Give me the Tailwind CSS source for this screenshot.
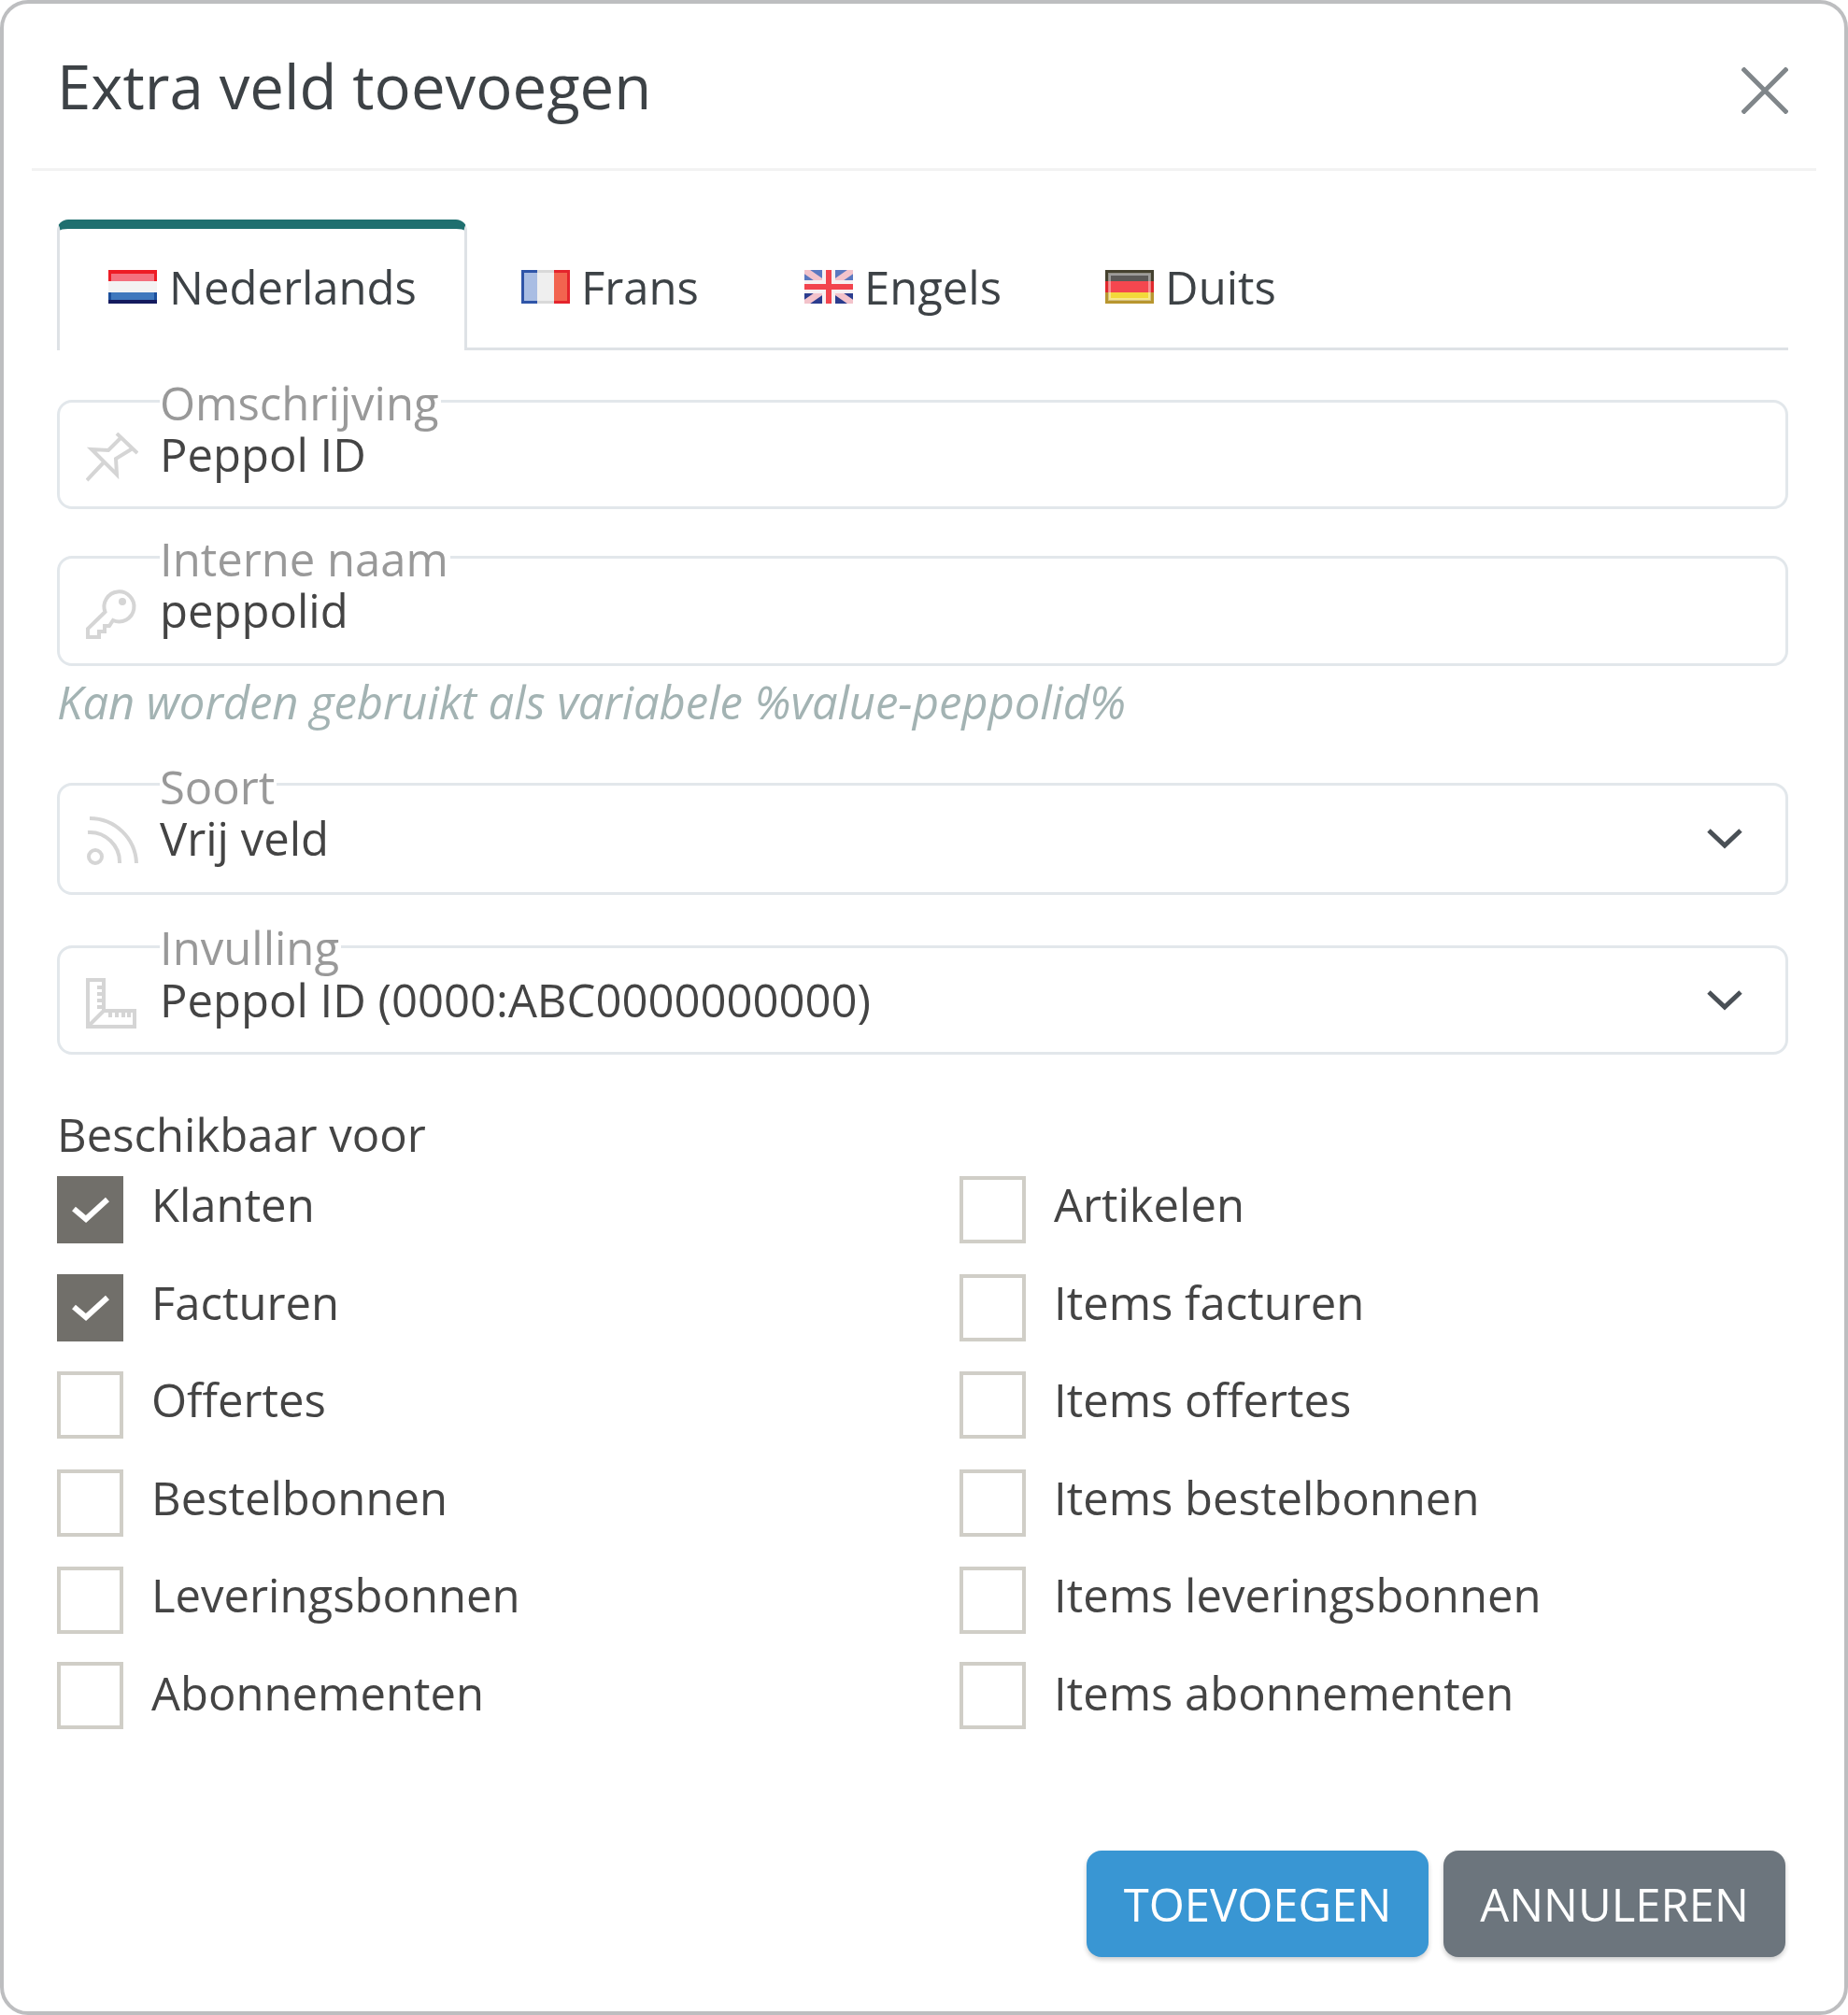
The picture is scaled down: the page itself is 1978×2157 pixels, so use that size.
<!DOCTYPE html>
<html>
  <head>
    <meta charset="utf-8">
    <title>Extra veld toevoegen</title>
    <script src="https://cdn.jsdelivr.net/npm/@tailwindcss/browser@4"></script>
  </head>
  <body class="bg-white">
    <div class="w-[1978px] h-[2157px] flex flex-col border-4 border-[#bdbec0] rounded-[30px] bg-white text-[#444444] font-['Open_Sans',sans-serif] text-[49px] leading-[60px]">
      <!-- header -->
      <div class="mx-[30px] h-[179px] shrink-0 flex items-start justify-between border-b-[3px] border-[#f2f2f2] pl-[27px] pr-[30px]">
        <h1 class="mt-[50px] text-[65.3px] leading-[76px] text-[#3d4246]">Extra veld toevoegen</h1>
        <svg class="mt-[68px]" width="50" height="50" viewBox="0 0 50 50" fill="none" stroke="#80868a" stroke-width="5"><path d="M1 1 49 49M49 1 1 49"/></svg>
      </div>

      <div class="flex flex-col pl-[57px] pr-[60px] pt-[52px]">
        <!-- tabs -->
        <div class="flex h-[140px] border-b-[3px] border-[#dee2e6] text-[#3d4246]">
          <div class="w-[439px] h-[140px] flex items-center gap-[13px] pl-[52px] pb-[6px] border-x-[3px] border-t-[10px] border-x-[#dee2e6] border-t-[#1f6f6f] rounded-t-[12px] bg-white">
            <svg width="52" height="36" viewBox="0 0 52 36"><rect width="52" height="12" fill="#ee1c25"/><rect y="12" width="52" height="12" fill="#f3f3f3"/><rect y="24" width="52" height="12" fill="#1b4f9c"/><rect y="32" width="52" height="4" fill="#141a5e"/><rect x="3" y="4" width="46" height="8" fill="#f4717f"/><rect x="3" y="24" width="46" height="8" fill="#3f78bd"/></svg>
            <span>Nederlands</span>
          </div>
          <div class="flex items-center gap-[12px] pl-[58px] pt-[10px] pb-[3px]">
            <svg width="52" height="36" viewBox="0 0 52 36"><rect width="17" height="36" fill="#2f55a8"/><rect x="17" width="18" height="36" fill="#d9d9d9"/><rect x="35" width="17" height="36" fill="#e4242c"/><rect x="3" y="3" width="14" height="30" fill="#a9bde3"/><rect x="17" y="3" width="18" height="30" fill="#efefef"/><rect x="35" y="3" width="14" height="30" fill="#f2644f"/></svg>
            <span>Frans</span>
          </div>
          <div class="flex items-center gap-[12px] pl-[113px] pt-[10px] pb-[3px]">
            <svg width="52" height="36" viewBox="0 0 52 36"><rect width="52" height="36" fill="#5b78c0"/><rect y="22" width="52" height="14" fill="#2b3c8e"/><path d="M0 0 52 36M52 0 0 36" stroke="#f3c3cb" stroke-width="7"/><rect x="19" width="14" height="36" fill="#f6f0f2"/><rect y="11" width="52" height="14" fill="#f6f0f2"/><rect x="23" width="6" height="36" fill="#f2444e"/><rect y="15" width="52" height="6" fill="#f2444e"/></svg>
            <span>Engels</span>
          </div>
          <div class="flex items-center gap-[12px] pl-[111px] pt-[10px] pb-[3px]">
            <svg width="52" height="36" viewBox="0 0 52 36"><rect width="52" height="12" fill="#45412f"/><rect y="12" width="52" height="12" fill="#e0282c"/><rect y="24" width="52" height="12" fill="#b8962f"/><rect x="4" y="4" width="44" height="8" fill="#5c5a58"/><rect x="4" y="12" width="44" height="12" fill="#f4474f"/><rect x="4" y="24" width="44" height="8" fill="#f2d93a"/><rect x="4.500" y="4.500" width="43" height="27" fill="none" stroke="#fff" stroke-opacity="0.4" stroke-width="3"/></svg>
            <span>Duits</span>
          </div>
        </div>

        <!-- Omschrijving -->
        <div class="relative mt-[53px] h-[117px] flex items-start gap-[23px] border-[3px] border-[#e2e7eb] rounded-[16px] pl-[28px] pt-[25px]">
          <span class="absolute left-[107px] -top-[22px] bg-white pr-[2px] leading-[44px] text-[#999999]">Omschrijving</span>
          <svg class="mt-[7px]" width="56" height="54" viewBox="0 0 56 54" fill="none" stroke="#d5d5d5" stroke-width="4"><path d="M33 1 55 22M38 5 24 19 6 18 33 45 32 28 50 17M19 32 1 51"/></svg>
          <span>Peppol ID</span>
        </div>

        <!-- Interne naam -->
        <div class="relative mt-[50px] h-[118px] flex items-start gap-[23px] border-[3px] border-[#e2e7eb] rounded-[16px] pl-[28px] pt-[25px]">
          <span class="absolute left-[107px] -top-[22px] bg-white pr-[2px] leading-[44px] text-[#999999]">Interne naam</span>
          <svg class="mt-[7px]" width="56" height="54" viewBox="0 0 56 54" fill="none" stroke="#d5d5d5" stroke-width="4"><path d="M20.500 25 2 43V52H14V46H20V40H25L29 34A16 16 0 1 0 20.500 25Z"/><circle cx="39" cy="14" r="4" fill="#d5d5d5" stroke="none"/></svg>
          <span>peppolid</span>
        </div>

        <p class="mt-[8px] h-[60px] italic tracking-[-0.06px] text-[#a3b3b3]">Kan worden gebruikt als variabele %value-peppolid%</p>

        <!-- Soort -->
        <div class="relative mt-[57px] h-[120px] flex items-start gap-[23px] border-[3px] border-[#e2e7eb] rounded-[16px] pl-[28px] pt-[26px]">
          <span class="absolute left-[107px] -top-[21px] bg-white pr-[2px] leading-[44px] text-[#999999]">Soort</span>
          <svg class="mt-[7px]" width="56" height="54" viewBox="0 0 56 54" fill="none" stroke="#d5d5d5" stroke-width="4"><circle cx="10" cy="43" r="7"/><path d="M2 17A32 32 0 0 1 36 50M4 2A50 50 0 0 1 54 50"/></svg>
          <span class="flex-1">Vrij veld</span>
          <svg class="mt-[20px] mr-[46px]" width="38" height="22" viewBox="0 0 38 22" fill="none" stroke="#4a5056" stroke-width="5"><path d="M2 2 19 18 36 2"/></svg>
        </div>

        <!-- Invulling -->
        <div class="relative mt-[54px] h-[117px] flex items-start gap-[23px] border-[3px] border-[#e2e7eb] rounded-[16px] pl-[28px] pt-[25px]">
          <span class="absolute left-[107px] -top-[23px] bg-white pr-[2px] leading-[44px] text-[#999999]">Invulling</span>
          <svg class="mt-[7px]" width="56" height="54" viewBox="0 0 56 54" fill="none" stroke="#d5d5d5" stroke-width="4"><path d="M2 2H19V35H52V52H2ZM2 52 19 35M19 10H12M19 17H12M19 24H12M19 31H12M26 35V42M33 35V42M40 35V42M46 35V42"/></svg>
          <span class="flex-1">Peppol ID (0000:ABC0000000000)</span>
          <svg class="mt-[20px] mr-[46px]" width="38" height="22" viewBox="0 0 38 22" fill="none" stroke="#4a5056" stroke-width="5"><path d="M2 2 19 18 36 2"/></svg>
        </div>

        <!-- Beschikbaar voor -->
        <div class="mt-[55px] h-[60px]">Beschikbaar voor</div>
        <div class="mt-[15px] grid grid-cols-[966px_1fr] gap-y-[32.5px]">
          <label class="flex items-start gap-[30px] h-[72px]"><span class="w-[71px] h-[72px] bg-[#716f6a] flex items-center justify-center"><svg width="40" height="28" viewBox="0 0 40 28" fill="none" stroke="#fff" stroke-width="6"><path d="M2 13 15 24 38 3"/></svg></span><span>Klanten</span></label>
          <label class="flex items-start gap-[30px] h-[72px]"><span class="w-[71px] h-[72px] border-4 border-[#d0cec7]"></span><span>Artikelen</span></label>
          <label class="flex items-start gap-[30px] h-[72px]"><span class="w-[71px] h-[72px] bg-[#716f6a] flex items-center justify-center"><svg width="40" height="28" viewBox="0 0 40 28" fill="none" stroke="#fff" stroke-width="6"><path d="M2 13 15 24 38 3"/></svg></span><span>Facturen</span></label>
          <label class="flex items-start gap-[30px] h-[72px]"><span class="w-[71px] h-[72px] border-4 border-[#d0cec7]"></span><span>Items facturen</span></label>
          <label class="flex items-start gap-[30px] h-[72px]"><span class="w-[71px] h-[72px] border-4 border-[#d0cec7]"></span><span>Offertes</span></label>
          <label class="flex items-start gap-[30px] h-[72px]"><span class="w-[71px] h-[72px] border-4 border-[#d0cec7]"></span><span>Items offertes</span></label>
          <label class="flex items-start gap-[30px] h-[72px]"><span class="w-[71px] h-[72px] border-4 border-[#d0cec7]"></span><span>Bestelbonnen</span></label>
          <label class="flex items-start gap-[30px] h-[72px]"><span class="w-[71px] h-[72px] border-4 border-[#d0cec7]"></span><span>Items bestelbonnen</span></label>
          <label class="flex items-start gap-[30px] h-[72px]"><span class="w-[71px] h-[72px] border-4 border-[#d0cec7]"></span><span>Leveringsbonnen</span></label>
          <label class="flex items-start gap-[30px] h-[72px]"><span class="w-[71px] h-[72px] border-4 border-[#d0cec7]"></span><span>Items leveringsbonnen</span></label>
          <label class="flex items-start gap-[30px] h-[72px]"><span class="w-[71px] h-[72px] -mt-[3px] border-4 border-[#d0cec7]"></span><span>Abonnementen</span></label>
          <label class="flex items-start gap-[30px] h-[72px]"><span class="w-[71px] h-[72px] -mt-[3px] border-4 border-[#d0cec7]"></span><span>Items abonnementen</span></label>
        </div>

        <!-- buttons -->
        <div class="mt-[127px] flex justify-end gap-[16px] pr-[3px]">
          <button class="w-[366px] h-[114px] rounded-[16px] bg-[#3996d3] text-white shadow-[0_3px_5px_rgba(0,0,0,0.2)]">TOEVOEGEN</button>
          <button class="w-[366px] h-[114px] rounded-[16px] bg-[#6c757d] text-white shadow-[0_3px_5px_rgba(0,0,0,0.2)]">ANNULEREN</button>
        </div>
      </div>
    </div>
  </body>
</html>
